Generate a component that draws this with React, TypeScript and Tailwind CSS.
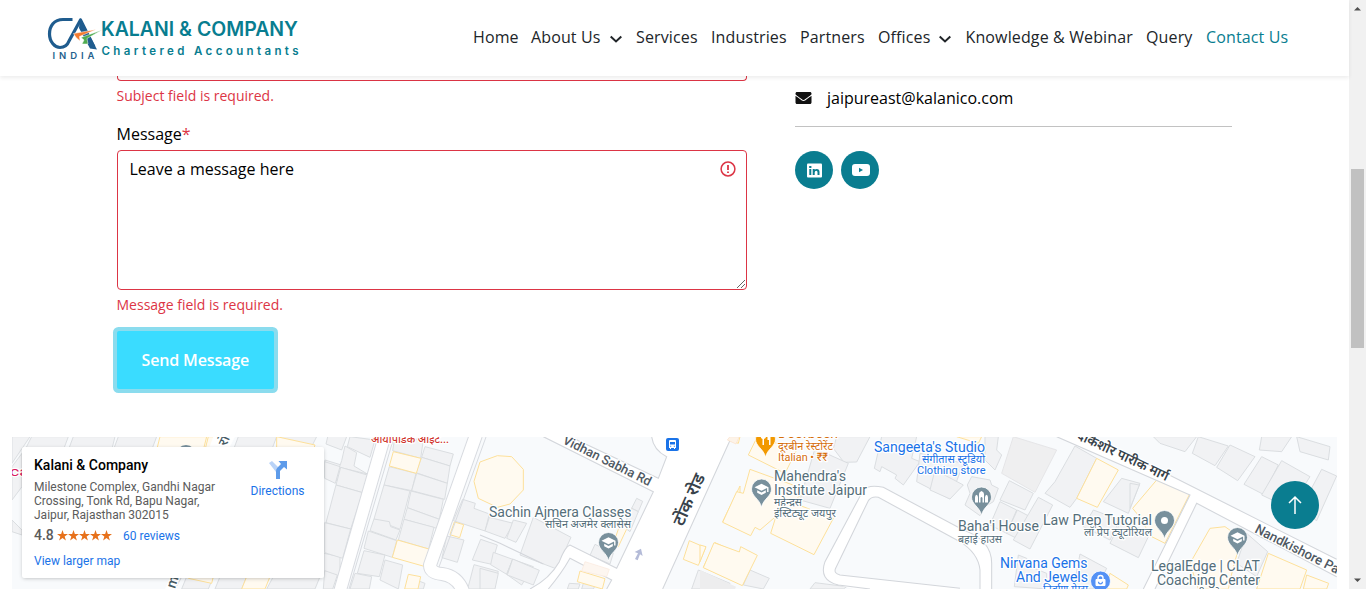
import React from "react";
import { FaEnvelope } from "react-icons/fa";

const building = { fill: "#f1f2f4", stroke: "#d8dbdf", strokeWidth: 2.8 };
const shop = { fill: "#fffaf0", stroke: "#fde09a", strokeWidth: 3 };
const edge = { fill: "none", stroke: "#d3d6db", strokeWidth: 3.2 };

type TileProps = { x: number; lots?: string[]; shops?: string[]; children?: React.ReactNode };

/* A map tile drawn on a grid three times finer than the page. */
function Tile({ x, lots = [], shops = [], children }: TileProps) {
  return (
    <g transform={`translate(${x} 430) scale(0.33333)`}>
      {lots.map((d) => (
        <path key={d} d={d} {...building} />
      ))}
      {shops.map((d) => (
        <path key={d} d={d} {...shop} />
      ))}
      {children}
    </g>
  );
}

type PinProps = { x: number; y: number; color?: string; kind: "school" | "dot" | "food" | "temple" | "bag" };

function Pin({ x, y, color = "#78909c", kind }: PinProps) {
  return (
    <g transform={`translate(${x} ${y})`}>
      <path
        d={kind === "bag" ? "M-10 0a10 10 0 1 0 20 0a10 10 0 1 0-20 0" : "M0 18.5C-1.5 10-10 7.5-10 0a10 10 0 1 1 20 0C10 7.5 1.5 10 0 18.5z"}
        fill={color}
        stroke="#fff"
        strokeWidth="0.8"
      />
      {kind === "school" && <path d="M0-5.3-7-1.8 0 1.7 5.6-1v4.1H7v-4.9zM-4.3 1.3v2.5L0 6l4.3-2.2V1.3L0 3.4z" fill="#fff" />}
      {kind === "dot" && <circle r="3.5" fill="#fff" />}
      {kind === "food" && <path d="M-4.8-8v5.5q0 2 1.8 2.6V6h1.5V.1Q.5-.5.5-2.5V-8h-1v5h-1v-5h-1v5h-1v-5zM5-8Q2-7 2-3v4h1.5v5H5z" fill="#fff" />}
      {kind === "temple" && <path d="M-6.5 5.5V.5q0-2 1.5-2.8Q-3.5-1.5-3.5.5V5.5zM-2.5 5.5V-3Q-2.5-5 0-6 2.5-5 2.5-3V5.5H1V1Q0-1-1 1v4.500zM3.5 5.5V.5Q3.5-1.5 5-2.3 6.5-1.5 6.5.5v5z" fill="#fff" />}
      {kind === "bag" && (
        <g fill="none" stroke="#fff">
          <path d="M-4.5-1.5h9v6h-9z" fill="#fff" />
          <path d="M-2.5-1.5v-1.500a2.500 2.500 0 0 1 5 0v1.500" strokeWidth="1.4" />
          <path d="M-2 .8a2 2 0 0 0 4 0" stroke="#5491f5" strokeWidth="1.2" />
        </g>
      )}
    </g>
  );
}

type LabelProps = { x: number; y: number; w: number; size?: number; color?: string; weight?: number; rotate?: number; children: string };

function Label({ x, y, w, size = 14, color = "#546e7a", weight = 400, rotate = 0, children }: LabelProps) {
  return (
    <text
      transform={`translate(${x} ${y}) rotate(${rotate})`}
      fontSize={size}
      fontWeight={weight}
      fill={color}
      stroke="#fff"
      strokeWidth="2.5"
      strokeLinejoin="round"
      paintOrder="stroke"
      textLength={w}
      lengthAdjust="spacingAndGlyphs"
    >
      {children}
    </text>
  );
}

function StreetMap() {
  return (
    <svg className="block h-[152px] w-[1325px] font-['Roboto','Noto_Sans','Noto_Sans_Devanagari',sans-serif]" viewBox="12 437 1325 152">
      <rect x="12" y="437" width="1325" height="152" fill="#f8fafc" />

      <Tile
        x={0}
        lots={[
          "M36 20H90L36 100z", "M95 20H205L190 60H75z", "M220 20H345L335 60H205z", "M355 20H470L455 60H340z",
          "M36 110 66 70V170L36 210z", "M36 270 66 300V315L36 305z",
          "M715 20H830L815 60H700z", "M845 20H950L930 60H825z",
          "M560 440H640L625 477H545z", "M660 440H740L725 477H645z", "M820 440H960L945 477H800z",
          "M975 90 1040 110V160L972 140z", "M972 370 1020 380V440L972 425z",
        ]}
        shops={["M480 20 620 20 610 60H470z", "M625 20 650 20 640 60H615z", "M740 440H810L795 477H725z", "M830 20 945 45 940 60H830z", "M570 440 640 440 635 460 565 445z"]}
      >
        <path d="M530 440 510 477M545 440 525 477M680 60 650 20" {...edge} />
        <path d="M640 20H705L685 60H625zM510 440H540L520 477H495z" fill="#fff" />
      </Tile>

      <Tile
        x={320}
        lots={[
          "M28 0 80 20 65 60 18 42z", "M90 20 165 30 150 82 82 50z", "M75 48 110 68 102 108 142 132 58 112 65 92z",
          "M14 95 60 110 46 160 14 145z", "M62 112 145 136 128 188 48 165z", "M48 165 128 188 92 297 18 278z",
          "M14 278 92 297 68 385 14 368z", "M14 422 52 435 38 477H10z",
          "M225 20 310 30 302 85 218 62z", "M315 50 400 72 390 108 305 82z", "M305 82 390 108 382 160 288 128z",
          "M208 110 288 130 275 182 192 165z", "M290 130 382 160 374 208 275 182z", "M192 165 270 183 240 298 162 267z",
          "M273 183 370 208 358 268 262 233z", "M262 233 358 268 350 295 252 268z", "M252 268 342 292 326 357 235 330z",
          "M162 267 208 275 212 290 240 300 228 330 150 302z", "M145 303 230 332 217 382 132 355z",
          "M132 362 195 375 178 440 112 430z", "M195 390 248 405 235 477 180 450z", "M105 430 155 440 148 477 90 477z",
          "M428 208 466 220 462 235 508 252 495 303 400 272z", "M508 262 580 280 555 325 495 303z", "M580 270 620 280 588 337 560 325z",
          "M380 318 432 330 412 397 366 383z", "M482 328 532 345 515 403 457 390z", "M520 367 578 388 560 433 512 404z", "M578 388 640 410 605 465 560 433z",
          "M462 404 535 424 520 477H443z", "M275 445 315 460 310 477H270z",
        ]}
        shops={[
          "M220 65 303 85 289 130 208 108z", "M232 330 330 358 316 410 217 382z", "M265 433 302 440 294 477H254z",
          "M403 276 431 284 419 323 390 314z", "M480 96 532 77 575 80 610 118V180L570 222 532 232 475 205 462 154z",
        ]}
      />

      <Tile
        x={480}
        lots={[
          "M470 205 488 214 475 245 455 235z", "M455 235 475 245 450 305 430 290z", "M345 343 400 370 390 402 330 376z",
          "M160 262 273 322 230 417 120 375z", "M98 387 178 421 160 465 82 435z", "M0 415 55 430 45 477H0z",
          "M268 460 300 462 295 477H262z", "M310 460 345 468 340 477H305z", "M655 420 750 460 740 477H635z",
        ]}
        shops={["M425 270 448 280 415 350 400 340z", "M300 423 375 446 367 477 292 455z", "M628 332 677 353 655 406 610 388z", "M705 338 800 380 775 460 670 412z", "M780 168 728 275 780 300z", "M755 20 780 20 775 40 745 30z"]}
      >
        <path d="M190 20 520 185 410 415 270 345Q255 350 238 395 210 445 150 477H205Q245 430 270 385L395 450 380 477H548L750 30 755 20H515Q520 60 560 80L535 145 270 20z" fill="#fff" />
        <path d="M190 20 520 185 410 415 270 345Q255 350 238 395 210 445 150 477M205 477Q245 430 270 385L395 450 380 477M548 477 755 20M515 20Q520 60 560 80L535 145 270 20M0 315 60 340 190 402" {...edge} />
        <path d="M315 395 388 418 380 440 305 423z" fill="#fdf6f0" stroke="#fbe9dc" strokeWidth="2" />
        <path d="M465 387 474 370 464 366 483 356 488 378 480 373 473 391z" fill="#b4bbd8" />
      </Tile>

      <Tile
        x={700}
        lots={[
          "M410 20 510 20 470 96 432 97 400 55z", "M345 55 445 100 390 235 300 210z",
          "M545 20 650 20 635 85 660 95 610 165 585 145 590 135 545 110 540 125 523 115z", "M660 70 790 100 750 207 650 155z",
          "M150 420 208 445 190 477 130 465z", "M345 458 440 470 430 477H330z",
        ]}
        shops={[
          "M172 20 290 60 255 130 145 75z",
          "M150 118 320 180 180 300 165 292 152 317 68 277 110 185 130 190z", "M245 205 400 265 342 374 212 310z",
          "M42 338 118 366 122 350 172 376 127 467 10 413z", "M0 345 18 350 0 395z",
        ]}
      >
        <path d="M0 420 108 470 105 477H0z" fill="#ededee" />
        <path d="M90 20H118L108 42 82 30z" fill="#fdf3e8" stroke="#fbe0c8" strokeWidth="2" />
      </Tile>

      <Tile
        x={930}
        lots={[
          "M165 20 205 20 200 60 215 75 195 120 165 90z", "M15 120 100 165 60 207 0 180z",
          "M125 140 180 150 185 165 205 175 190 215 165 230 150 257 105 225 120 190 112 165z", "M238 152 310 190 285 240 210 210z", "M210 215 260 240 230 310 180 285z",
          "M262 240 300 260 270 330 230 310z", "M325 202 368 225 300 357 250 330z",
          "M435 48 500 85 440 205 420 232 345 190 375 155z", "M575 145 630 160 595 250 520 215z",
          "M490 240 570 270 540 330 460 290z", "M575 270 660 310 625 383 540 340z", "M450 372 530 415 500 477H430z", "M265 375 290 385 300 410 350 430 350 477 253 470z",
        ]}
        shops={["M500 85 565 120 502 232 440 205z", "M680 150 780 190 705 340 665 320 620 250 608 235z", "M540 430 595 465 590 477H530z", "M80 20H155L145 40z"]}
      >
        <path d="M250 20 380 60 315 187 215 130z" fill="#efeff0" stroke="#e2e2e4" strokeWidth="2.5" />
      </Tile>

      <Tile
        x={1130}
        lots={[
          "M70 20H200L165 65 90 40z", "M205 20 295 48 255 107 187 70z", "M300 45 375 80 323 152 260 112z", "M395 80 445 105 400 193 342 163z",
          "M395 20H485L455 65 388 60z", "M500 20 600 50 595 90 510 65z", "M455 92 540 140 480 235 395 195z", "M575 118 620 138 560 272 510 240z",
          "M0 160 28 165 0 235z", "M350 310 413 365 380 440 320 400z",
        ]}
        shops={["M240 295 285 290 335 325 310 410 295 477H205L180 400z", "M415 370 530 420 510 477H380z", "M530 435 596 460 590 477H520z"]}
      />

      <Tile x={700}>
        <path d="M375 395 490 180Q505 163 550 172L790 300Q875 330 875 400V477H840V420Q835 370 780 335L535 202Q515 198 505 212L407 415Q400 430 420 435L780 475V490H510L415 465Q355 450 375 395z" fill="#fff" />
        <path d="M840 477V420Q835 370 780 335L535 202Q515 198 505 212L407 415Q400 430 420 435L780 475M510 477 415 465Q355 450 375 395L490 180Q505 163 550 172L790 300Q875 330 875 400V477" {...edge} />
      </Tile>
      <Tile x={1130}>
        <path d="M-220 20-110 20 620 388V440L200 220 75 477H40L180 195z" fill="#fff" />
        <path d="M-110 20 620 388M620 440 200 220 75 477M40 477 180 195-220 20" {...edge} />
      </Tile>

      <g fill="none" strokeLinejoin="round">
        <path d="M385 435 340 591" stroke="#d8dbe0" strokeWidth="13.5" />
        <path d="M385 435 340 591" stroke="#fff" strokeWidth="11.5" />
        <path d="M394 437 349 589M486 437 439 567" stroke="#d8dbe0" />
        <path d="M476 435 430 565Q430 573 442 574 457 576 463 591" stroke="#d8dbe0" strokeWidth="14" />
        <path d="M476 435 430 565Q430 573 442 574 457 576 463 591" stroke="#fff" strokeWidth="12" />
      </g>

      <Label x={371} y={443} w={78} size={11.5} color="#d0342c" weight={500}>आयोपैडिक ऑइंट...</Label>
      <Label x={10} y={476} w={42} size={13} color="#d81b60">cacia</Label>
      <Label x={226} y={447} w={18} size={13} color="#455a64" weight={500} rotate={-65}>रोड</Label>
      <Label x={175} y={589} w={12} size={14} color="#455a64" weight={500} rotate={-72}>m</Label>
      <circle cx="186" cy="455" r="10" fill="#78909c" />
      <Label x={562} y={443} w={97} size={13} color="#4f5963" weight={500} rotate={26.5}>Vidhan Sabha Rd</Label>
      <Label x={683} y={527} w={55} size={17} color="#37424a" weight={600} rotate={-66}>टोंक रोड</Label>
      <Label x={489} y={517} w={142.5}>Sachin Ajmera Classes</Label>
      <Label x={545} y={528} w={86} size={11.5}>सचिन अजमेर क्लासेस</Label>
      <Pin x={608.5} y={542.5} kind="school" />
      <g transform="translate(666 438)">
        <rect width="13" height="13" rx="2" fill="#1a73e8" />
        <path d="M3 3q0-1 1-1h5q1 0 1 1v7H9v1H8v-1H5v1H4v-1H3z" fill="#fff" />
        <path d="M4 4h5v2.500H4zM4.200 7.700h1v1h-1zM7.800 7.700h1v1h-1z" fill="#1a73e8" />
      </g>

      <Pin x={765.5} y={439} color="#f29900" kind="food" />
      <Label x={778} y={438} w={60} color="#d56e0c">Doorbeen</Label>
      <Label x={778} y={450} w={55} size={11.5} color="#d56e0c">दूरबीन रेस्टोरेंट</Label>
      <Label x={778} y={461} w={50} size={11.5} color="#d56e0c">Italian • ₹₹</Label>
      <Pin x={761.5} y={489} kind="school" />
      <Label x={774} y={481} w={72}>Mahendra's</Label>
      <Label x={774} y={495} w={93}>Institute Jaipur</Label>
      <Label x={774} y={506} w={28} size={11.5}>महेन्द्रस</Label>
      <Label x={774} y={517} w={62} size={11.5}>इंस्टिट्यूट जयपुर</Label>
      <Label x={874} y={452} w={111} color="#1a73e8">Sangeeta's Studio</Label>
      <Label x={922} y={463} w={63} size={11.5} color="#1a73e8">संगीतास स्टूडियो</Label>
      <Label x={917} y={474} w={68.5} size={11.5} color="#1a73e8">Clothing store</Label>
      <Pin x={981.5} y={497} kind="temple" />
      <Label x={958} y={531} w={81}>Baha'i House</Label>
      <Label x={958} y={543} w={44} size={11.5}>बहाई हाउस</Label>
      <Label x={1043} y={525} w={109}>Law Prep Tutorial</Label>
      <Label x={1084} y={536} w={68} size={11.5}>लॉ प्रेप ट्यूटोरियल</Label>
      <Pin x={1164.5} y={520.5} kind="dot" />
      <Label x={1000} y={568} w={87.5} color="#1a73e8">Nirvana Gems</Label>
      <Label x={1016} y={582} w={72} color="#1a73e8">And Jewels</Label>
      <Label x={1043} y={593} w={45} size={11.5} color="#1a73e8">निर्वाण गेम्स</Label>
      <Pin x={1100.5} y={581} color="#5491f5" kind="bag" />
      <Label x={1065} y={433} w={112} size={13.5} color="#37424a" weight={600} rotate={25.5}>नन्दकिशोर पारीक मार्ग</Label>
      <Pin x={1237.5} y={537.5} kind="school" />
      <Label x={1151} y={571} w={109}>LegalEdge | CLAT</Label>
      <Label x={1157} y={585} w={103}>Coaching Center</Label>
      <Label x={1194} y={597} w={36} size={11.5}>लीगलेज</Label>
      <Label x={1254} y={532} w={118} size={13.5} color="#4f5963" weight={500} rotate={27}>Nandkishore Pareek</Label>
    </svg>
  );
}

function Logo() {
  return (
    <svg className="h-[50px] w-[256px] font-['Inter',sans-serif]" viewBox="46 14 256 50" fill="none">
      <path d="M72.500 19.500H63C54 19.500 49.500 26 49.500 34S55 47.500 60 47.500C65 47.500 67.500 45 69 41L80.500 20 94 47" stroke="#1f5c8e" strokeWidth="3.2" strokeLinejoin="round" />
      <path d="M80 18 97 49.500 90 48.500 79 28z" fill="#1f5c8e" />
      <path d="M73.500 33.500 96 29.500 79.500 36.500 80 41 76 37.500z" fill="#f47b30" stroke="#fff" strokeWidth=".5" />
      <path d="M81 37.500 102 30 87 38.500 88 44 82 44 84 40z" fill="#4fac50" stroke="#fff" strokeWidth=".5" />
      <text x="52.5" y="59" fontSize="9.5" fontWeight="600" fill="#255f8d" textLength="42">INDIA</text>
      <text x="101" y="36" fontSize="19.5" fontWeight="600" fill="#087d90" textLength="197" lengthAdjust="spacingAndGlyphs">KALANI &amp; COMPANY</text>
      <text x="101.5" y="55" fontSize="11.500" fontWeight="600" fill="#087d90" textLength="197">Chartered Accountants</text>
    </svg>
  );
}

const Chevron = () => (
  <svg className="mt-1 ml-[9px] h-3 w-3" viewBox="0 0 12 12" fill="none" stroke="#212529" strokeWidth="2">
    <path d="m.7 3.5 5.3 5 5.3-5" />
  </svg>
);

function Header() {
  return (
    <header className="relative z-10 flex h-[76px] items-start bg-white pl-[46px] shadow-[0_2px_4px_rgba(0,0,0,0.075)]">
      <div className="w-[427px] shrink-0 pt-[14px]"><Logo /></div>
      <nav className="flex pt-[25px] text-[16px] leading-6 tracking-[0.13px] whitespace-nowrap text-[#212529]">
        <a className="w-[58px]">Home</a>
        <a className="flex w-[105px] items-center">About Us<Chevron /></a>
        <a className="w-[75px]">Services</a>
        <a className="w-[89px]">Industries</a>
        <a className="w-[78px]">Partners</a>
        <a className="flex w-[87.5px] items-center">Offices<Chevron /></a>
        <a className="w-[180.5px]">Knowledge &amp; Webinar</a>
        <a className="w-[60px]">Query</a>
        <a className="w-[84px] text-[#087d90]">Contact Us</a>
      </nav>
    </header>
  );
}

const Star = () => (
  <svg className="h-[11px] w-[11px]" viewBox="0 0 22 22" fill="#e7711b">
    <path d="M11 0l2.700 7.900H22l-6.700 5 2.500 8.100L11 16.100 4.200 21l2.500-8.100L0 7.900h8.300z" />
  </svg>
);

function PlaceCard() {
  return (
    <div className="absolute top-[10px] left-[10px] flex h-[131px] w-[302px] rounded-[2px] bg-white pt-[10px] pl-3 font-['Roboto',sans-serif] shadow-[0_1px_4px_-1px_rgba(0,0,0,0.3)]">
      <div className="w-[203px]">
        <div className="text-[14px] leading-4 font-medium text-black">Kalani &amp; Company</div>
        <div className="mt-[7px] text-[12px] leading-[14px] whitespace-nowrap text-[#5b5b5b]">
          Milestone Complex, Gandhi Nagar<br />Crossing, Tonk Rd, Bapu Nagar,<br />Jaipur, Rajasthan 302015
        </div>
        <div className="mt-[6px] flex h-4 items-center text-[12px] text-[#1a73e8]">
          <span className="-mt-[2px] w-[23px] text-[14px] font-medium text-[#5b5b5b]">4.8</span>
          <span className="-mt-[2px] flex w-[66px]">
            {[1, 2, 3, 4, 5].map((n) => <Star key={n} />)}
          </span>
          <span>60 reviews</span>
        </div>
        <div className="mt-[10px] text-[12px] leading-[14px] text-[#1a73e8]">View larger map</div>
      </div>
      <div className="flex w-[81px] flex-col items-center pt-[3px] text-[12px] leading-[18px] text-[#1a73e8]">
        <svg className="h-[20px] w-[20px]" viewBox="0 0 20 20">
          <path d="M1 3 4 1l6 6-2 5Z" fill="#b9d3f8" />
          <path d="M8 19V11q0-2 1.5-3.5L13 4l-2.500-3H19v8.500L16 7l-4 4v8z" fill="#5d9bea" />
        </svg>
        <span className="mt-[2px]">Directions</span>
      </div>
    </div>
  );
}

function Scrollbar() {
  return (
    <div className="flex h-full w-[17px] shrink-0 flex-col items-center justify-between bg-[#f1f1f1] py-[6px]">
      <svg className="h-[5px] w-[7px]" viewBox="0 0 7 5"><path d="M0 4.5 3.5 1 7 4.5z" fill="#505050" /></svg>
      <div className="mt-[158px] mb-auto h-[179px] w-[13px] bg-[#c1c1c1]" />
      <svg className="h-[5px] w-[7px]" viewBox="0 0 7 5"><path d="M0 .5 3.5 4 7 .5z" fill="#505050" /></svg>
    </div>
  );
}

export default function App() {
  return (
    <div className="flex h-[589px] w-[1366px] overflow-hidden bg-white font-['Open_Sans',sans-serif] text-[16px] text-black">
      <div className="w-[1349px] shrink-0">
        <Header />
        <main className="flex h-[361px] pl-[116.5px]">
          <form className="w-[630px]">
            <div className="h-[5px] rounded-b-[4px] border border-t-0 border-[#dc3545]" />
            <div className="mt-1 text-[14px] leading-[21px] text-[#dc3545]">Subject field is required.</div>
            <div className="mt-4 leading-6">Message<span className="text-[#dc3545]">*</span></div>
            <div className="relative mt-1 h-[140px] rounded-[4px] border border-[#dc3545] px-3 py-[6px] leading-6">
              <span>Leave a message here</span>
              <svg className="absolute top-[10px] right-[10px] h-4 w-4" viewBox="0 0 16 16" fill="none" stroke="#dc3545" strokeWidth="1.5">
                <circle cx="8" cy="8" r="6.9" />
                <path d="M8 4v5M8 10.5v1.5" strokeWidth="1.8" />
              </svg>
              <svg className="absolute right-0 bottom-0 h-[10px] w-[10px]" viewBox="0 0 10 10" stroke="#555" strokeWidth=".9">
                <path d="m1 9 8-8M5 9l4-4" />
              </svg>
            </div>
            <div className="mt-1 text-[14px] leading-[21px] text-[#dc3545]">Message field is required.</div>
            <button type="button" className="mt-4 h-[58px] w-[157.5px] rounded-[2px] bg-[#3adcff] font-semibold tracking-[-0.15px] whitespace-nowrap text-white shadow-[0_0_0_4px_#8bdcee]">
              Send Message
            </button>
          </form>
          <aside className="ml-[48.5px] w-[437px]">
            <div className="flex h-[51px] items-center border-b border-[#c2c2c2] pb-[6px]">
              <FaEnvelope className="h-4 w-[17px] text-[#111]" />
              <span className="ml-[15px]">jaipureast@kalanico.com</span>
            </div>
            <div className="mt-6 flex gap-2">
              <a className="flex h-[38px] w-[38px] items-center justify-center rounded-full bg-[#0a7d90]">
                <svg className="ml-[1px] h-[15px] w-[15px]" viewBox="0 0 15 15">
                  <rect y=".5" width="15" height="14" rx="1" fill="#fff" />
                  <path d="M2.3 6h2v6h-2zM2.2 3h2.200v2H2.200zM5.700 6h2v.8Q8.400 5.900 9.800 5.900 12.500 5.900 12.500 9v3h-2V9.200q0-1.500-1.200-1.500-1.600 0-1.600 1.700V12h-2z" fill="#0a7d90" />
                </svg>
              </a>
              <a className="flex h-[38px] w-[38px] items-center justify-center rounded-full bg-[#0a7d90]">
                <svg className="ml-[1px] h-3 w-[18px]" viewBox="0 0 18 12">
                  <path d="M3 0h12q3 0 3 3v6q0 3-3 3H3q-3 0-3-3V3q0-3 3-3z" fill="#fff" />
                  <path d="m7 3.800 4 2.200-4 2.200z" fill="#0a7d90" />
                </svg>
              </a>
            </div>
          </aside>
        </main>
        <section className="relative ml-3 h-[152px] w-[1325px] overflow-hidden">
          <StreetMap />
          <PlaceCard />
          <a className="absolute top-[44px] left-[1259px] flex h-12 w-12 items-center justify-center rounded-full bg-[#0a7d90]">
            <svg className="h-5 w-4" viewBox="0 0 16 20" fill="none" stroke="#fff" strokeWidth="1.5"><path d="M8 19V2M2 8l6-6 6 6" /></svg>
          </a>
        </section>
      </div>
      <Scrollbar />
    </div>
  );
}
